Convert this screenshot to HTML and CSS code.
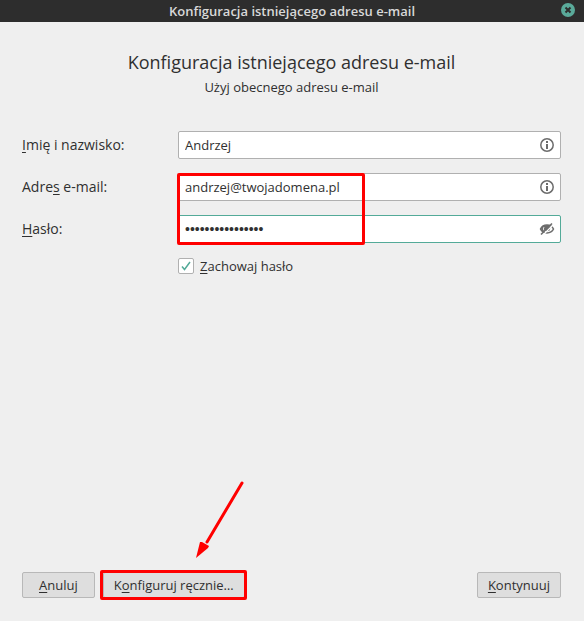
FILE: index.html
```html
<!DOCTYPE html>
<html lang="pl">
<head>
  <meta charset="utf-8">
  <title>Konfiguracja istniejącego adresu e-mail</title>
  <meta name="viewport" content="width=device-width, initial-scale=1.0">
  <link rel="stylesheet" href="styles.css">
</head>
<body>
  <header class="titlebar">
    <span class="titlebar-text">Konfiguracja istniejącego adresu e-mail</span>
    <button class="close-btn" type="button" aria-label="Zamknij">
      <svg width="14" height="14" viewBox="0 0 14 14">
        <circle cx="7" cy="7" r="7" fill="#5aaa9a"/>
        <path d="M4.5 4.5l5 5M9.5 4.5l-5 5" stroke="#2d2d2d" stroke-width="2"/>
      </svg>
    </button>
  </header>

  <form class="dialog">
    <h1>Konfiguracja istniejącego adresu e-mail</h1>
    <p class="subtitle">Użyj obecnego adresu e-mail</p>

    <div class="fields">
      <label for="name"><u>I</u>mię i nazwisko:</label>
      <div class="field">
        <input type="text" id="name" value="Andrzej">
        <svg class="icon" width="16" height="16" viewBox="0 0 16 16">
          <circle cx="8" cy="8" r="6.2" fill="none" stroke="#6c6c6c" stroke-width="1.5"/>
          <path d="M7 4h2v2H7zM7 7h2v5H7z" fill="#6c6c6c"/>
        </svg>
      </div>

      <label for="email">Adre<u>s</u> e-mail:</label>
      <div class="field">
        <input type="text" id="email" value="andrzej@twojadomena.pl">
        <svg class="icon" width="16" height="16" viewBox="0 0 16 16">
          <circle cx="8" cy="8" r="6.2" fill="none" stroke="#6c6c6c" stroke-width="1.5"/>
          <path d="M7 4h2v2H7zM7 7h2v5H7z" fill="#6c6c6c"/>
        </svg>
      </div>

      <label for="password"><u>H</u>asło:</label>
      <div class="field active">
        <input type="password" id="password" value="abcdefghijklmnop">
        <svg class="icon" width="16" height="16" viewBox="0 0 16 16">
          <path d="M1.5 8C4 2.8 12 2.8 14.5 8C12 13.2 4 13.2 1.5 8z" fill="none" stroke="#6c6c6c" stroke-width="1.5"/>
          <path d="M2 7.5C4 4 8 3.5 11 4.5L8 7L4.5 11C3 10.2 2 9 2 7.5z" fill="#6c6c6c"/>
          <circle cx="8.5" cy="7.5" r="2.7" fill="#6c6c6c"/>
          <path d="M5 6.2c-.8 1-.7 2.2 0 3.2" fill="none" stroke="#fff"/>
          <path d="M3.5 14.5L14.5 3.5" stroke="#fff" stroke-width="1.2"/>
          <path d="M2 13.5L13 2.5" stroke="#6c6c6c" stroke-width="1.6"/>
        </svg>
      </div>

      <label class="remember">
        <input type="checkbox" checked>
        <span><u>Z</u>achowaj hasło</span>
      </label>

      <div class="highlight highlight-fields"></div>
    </div>

    <footer class="actions">
      <button type="button"><u>A</u>nuluj</button>
      <div class="manual">
        <button type="button">K<u>o</u>nfiguruj ręcznie…</button>
        <div class="highlight highlight-manual"></div>
        <svg class="arrow" width="50" height="80" viewBox="0 0 50 80">
          <path d="M47 4L12 63" stroke="#f00" stroke-width="3" stroke-linecap="round"/>
          <path d="M1 79L5 63L7 63L14 67L13 69z" fill="#f00"/>
        </svg>
      </div>
      <button type="submit" class="next"><u>K</u>ontynuuj</button>
    </footer>
  </form>
</body>
</html>
```

FILE: styles.css
```css
body {
  display: flex;
  flex-direction: column;
  min-height: 100vh;
  margin: 0;
  font-family: "Open Sans", "Noto Sans", sans-serif;
  font-size: 13px;
  line-height: 18px;
  color: #303030;
  background-color: #efefef;
}

.titlebar {
  display: grid;
  grid-template-columns: 1fr auto 1fr;
  align-items: center;
  height: 22px;
  padding: 0 9px;
  background-color: #2d2d2d;
  color: #d8d8d8;
}

.titlebar-text {
  grid-column: 2;
  font-weight: 600;
}

.close-btn {
  justify-self: end;
  align-self: start;
  display: flex;
  margin-top: 3px;
  padding: 0;
  border: none;
  background: none;
}

.dialog {
  flex: 1;
  display: flex;
  flex-direction: column;
  padding: 28px 23px 23px 22px;
}

h1 {
  margin: 0;
  font-size: 18px;
  font-weight: normal;
  line-height: 24px;
  text-align: center;
}

.subtitle {
  margin: 4px 0 35px;
  text-align: center;
}

.fields {
  position: relative;
  display: grid;
  grid-template-columns: 156px 1fr;
  row-gap: 14px;
  align-items: center;
}

.fields > label {
  font-size: 14px;
}

u {
  text-decoration-thickness: 1px;
  text-underline-offset: 2px;
  text-decoration-skip-ink: none;
}

.field {
  display: flex;
  align-items: center;
  box-sizing: border-box;
  height: 28px;
  padding: 0 5px 0 6px;
  border: 1px solid #b0b0b0;
  border-radius: 2px;
  background-color: #fff;
}

.field.active {
  border-color: #53aa98;
}

.field input {
  flex: 1;
  min-width: 0;
  padding: 0;
  border: none;
  outline: none;
  background: none;
  font-family: inherit;
  font-size: 13px;
  color: #303030;
}

.field input[type="password"] {
  font-family: "Liberation Sans", sans-serif;
  font-size: 14px;
}

.fields > .remember {
  grid-column: 2;
  justify-self: start;
  display: flex;
  align-items: center;
  gap: 6px;
  font-size: 13px;
}

.remember input {
  appearance: none;
  width: 16px;
  height: 16px;
  margin: 0;
  border: 1px solid #b0b0b0;
  border-radius: 2px;
  background: #fff url("data:image/svg+xml,%3Csvg xmlns='http://www.w3.org/2000/svg' viewBox='0 0 14 14'%3E%3Cpath d='M3 7.5L5.5 10.5L11 3' fill='none' stroke='%2353aa98' stroke-width='1.5'/%3E%3C/svg%3E");
}

.actions {
  display: flex;
  gap: 8px;
  margin-top: auto;
}

.actions button {
  height: 26px;
  padding: 0 16px;
  border: 1px solid #b8b8b8;
  border-radius: 2px;
  background-color: #dedede;
  font-family: inherit;
  font-size: 13px;
  color: #303030;
}

.manual {
  position: relative;
}

.actions .manual button {
  padding: 0 10px;
}

.actions .next {
  margin-left: auto;
  padding: 0 10px;
}

/* red markers over the controls */
.highlight {
  position: absolute;
  border: 3px solid #f00;
  border-radius: 2px;
  pointer-events: none;
}

.highlight-fields {
  top: 42px;
  left: 155px;
  width: 182px;
  height: 66px;
}

.highlight-manual {
  inset: -2px -2px -2px -3px;
}

.arrow {
  position: absolute;
  left: 92px;
  bottom: 39px;
  pointer-events: none;
}
```
